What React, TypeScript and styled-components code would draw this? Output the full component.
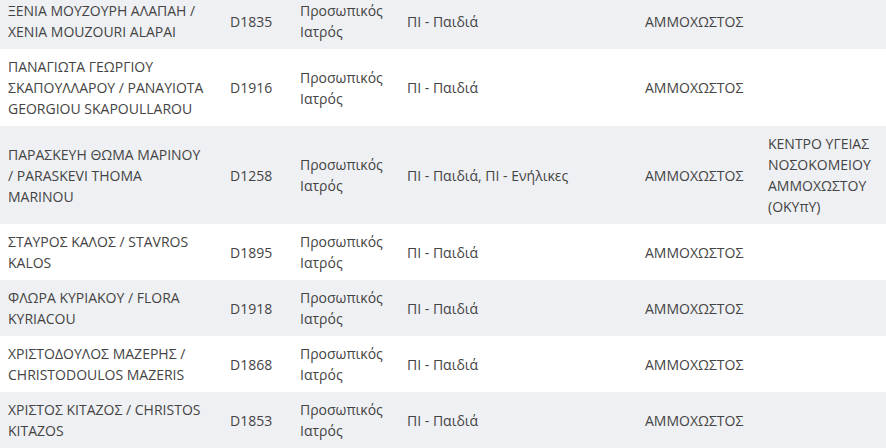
import React from "react";
import styled, { createGlobalStyle } from "styled-components";

interface IDoctor {
  name: string;
  code: string;
  specialty: string;
  category: string;
  district: string;
  center?: string;
}

const DOCTORS: IDoctor[] = [
  {
    name: "ΞΕΝΙΑ ΜΟΥΖΟΥΡΗ ΑΛΑΠΑΗ / XENIA MOUZOURI ALAPAI",
    code: "D1835",
    specialty: "Προσωπικός Ιατρός",
    category: "ΠΙ - Παιδιά",
    district: "ΑΜΜΟΧΩΣΤΟΣ",
  },
  {
    name: "ΠΑΝΑΓΙΩΤΑ ΓΕΩΡΓΙΟΥ ΣΚΑΠΟΥΛΛΑΡΟΥ / PANAYIOTA GEORGIOU SKAPOULLAROU",
    code: "D1916",
    specialty: "Προσωπικός Ιατρός",
    category: "ΠΙ - Παιδιά",
    district: "ΑΜΜΟΧΩΣΤΟΣ",
  },
  {
    name: "ΠΑΡΑΣΚΕΥΗ ΘΩΜΑ ΜΑΡΙΝΟΥ / PARASKEVI THOMA MARINOU",
    code: "D1258",
    specialty: "Προσωπικός Ιατρός",
    category: "ΠΙ - Παιδιά, ΠΙ - Ενήλικες",
    district: "ΑΜΜΟΧΩΣΤΟΣ",
    center: "ΚΕΝΤΡΟ ΥΓΕΙΑΣ ΝΟΣΟΚΟΜΕΙΟΥ ΑΜΜΟΧΩΣΤΟΥ (ΟΚΥπΥ)",
  },
  {
    name: "ΣΤΑΥΡΟΣ ΚΑΛΟΣ / STAVROS KALOS",
    code: "D1895",
    specialty: "Προσωπικός Ιατρός",
    category: "ΠΙ - Παιδιά",
    district: "ΑΜΜΟΧΩΣΤΟΣ",
  },
  {
    name: "ΦΛΩΡΑ ΚΥΡΙΑΚΟΥ / FLORA KYRIACOU",
    code: "D1918",
    specialty: "Προσωπικός Ιατρός",
    category: "ΠΙ - Παιδιά",
    district: "ΑΜΜΟΧΩΣΤΟΣ",
  },
  {
    name: "ΧΡΙΣΤΟΔΟΥΛΟΣ ΜΑΖΕΡΗΣ / CHRISTODOULOS MAZERIS",
    code: "D1868",
    specialty: "Προσωπικός Ιατρός",
    category: "ΠΙ - Παιδιά",
    district: "ΑΜΜΟΧΩΣΤΟΣ",
  },
  {
    name: "ΧΡΙΣΤΟΣ ΚΙΤΑΖΟΣ / CHRISTOS KITAZOS",
    code: "D1853",
    specialty: "Προσωπικός Ιατρός",
    category: "ΠΙ - Παιδιά",
    district: "ΑΜΜΟΧΩΣΤΟΣ",
  },
];

const COLUMN_WIDTHS = [222, 70, 107, 238, 123, 126];

function App() {
  return (
    <>
      <GlobalStyle />
      <Viewport>
        <Table>
          <colgroup>
            {COLUMN_WIDTHS.map((w, i) => (
              <col key={i} style={{ width: w }} />
            ))}
          </colgroup>
          <tbody>
            {DOCTORS.map((doc, i) => (
              <Row key={doc.code} $striped={i % 2 === 0}>
                <NameCell>{doc.name}</NameCell>
                <Cell>{doc.code}</Cell>
                <Cell>{doc.specialty}</Cell>
                <Cell>{doc.category}</Cell>
                <Cell>{doc.district}</Cell>
                <Cell>{doc.center ?? ""}</Cell>
              </Row>
            ))}
          </tbody>
        </Table>
      </Viewport>
    </>
  );
}

export default App;

const GlobalStyle = createGlobalStyle`
  html, body {
    margin: 0;
    padding: 0;
    background: #ffffff;
  }
  body {
    font-family: "Open Sans", "Noto Sans", sans-serif;
  }
`;

const Viewport = styled.div`
  width: 886px;
  height: 448px;
  overflow: hidden;
`;

const Table = styled.table`
  width: 886px;
  margin-top: -7px;
  border-collapse: collapse;
  table-layout: fixed;
  font-size: 14px;
  line-height: 21px;
  color: #444444;
`;

const Row = styled.tr<{ $striped: boolean }>`
  background: ${(p) => (p.$striped ? "#eff0f3" : "#ffffff")};
`;

const Cell = styled.td`
  padding: 7px 8px;
  vertical-align: middle;
  text-align: left;
`;

const NameCell = styled(Cell)`
  padding-right: 15px;
`;
